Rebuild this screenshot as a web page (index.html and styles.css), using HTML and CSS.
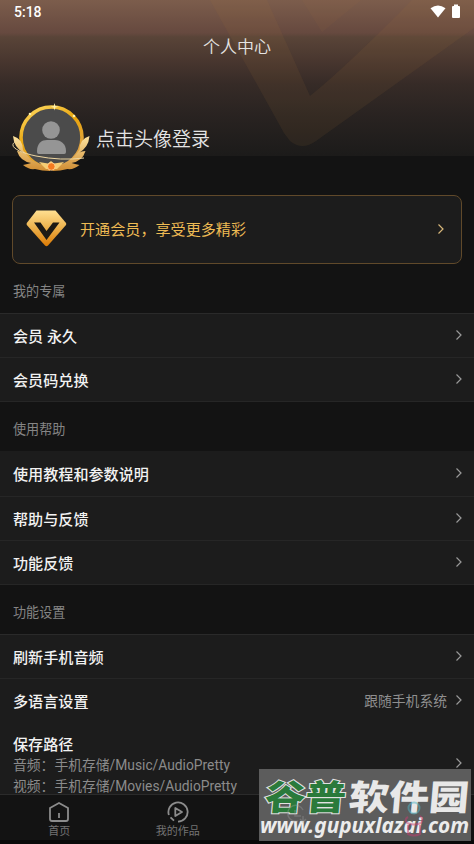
FILE: index.html
```html
<!DOCTYPE html>
<html lang="zh-CN">
<head>
<meta charset="utf-8">
<title>个人中心</title>
<link rel="stylesheet" href="styles.css">
</head>
<body>
<svg width="0" height="0" class="defs"><defs><symbol id="chev" viewBox="0 0 8 12"><path d="M1.5 1.5 6 6 1.5 10.5" fill="none" stroke="currentColor" stroke-width="1.2"/></symbol></defs></svg>
<div class="screen">
  <header class="hero">
    <svg class="hero-art" viewBox="0 0 474 156">
      <path d="M210 0H267L310 96Q345 68 412 0H474V28L316 141Q302 151 290 141L284 133Z" fill="#a5793f" fill-opacity=".1"/>
      <path d="M302 0H361L322 32Z" fill="#a5793f" fill-opacity=".08"/>
    </svg>
    <div class="status">
      <span>5:18</span>
      <svg width="31" height="16" viewBox="0 0 31 16"><path d="M.5 4.2Q8 -1.4 15.500 4.200L8 13.500Z" fill="#fff"/><path d="M22 3q0-1 1-1h1V.5h4V2h1q1 0 1 1v10q0 1-1 1h-6q-1 0-1-1Z" fill="#fff"/></svg>
    </div>
    <h1>个人中心</h1>
    <div class="profile">
      <svg class="avatar" viewBox="0 0 80 70">
        <defs><linearGradient id="ring" x1="0" y1="0" x2=".5" y2="1"><stop offset="0" stop-color="#ffdc67"/><stop offset=".5" stop-color="#e9a50d"/><stop offset="1" stop-color="#dda34b"/></linearGradient>
        <linearGradient id="leaf" x1="0" y1="0" x2="0" y2="1"><stop offset="0" stop-color="#ffe5a0"/><stop offset="1" stop-color="#cf8c32"/></linearGradient></defs>
        <circle cx="40.500" cy="34.500" r="30.500" fill="#4b4b4b" stroke="url(#ring)" stroke-width="3.600"/>
        <circle cx="40" cy="27" r="8.800" fill="#959595"/>
        <path d="M26 48c0-8 5-11 10-11h8c6 0 11 4 11 11 0 3-1 3-3 3H29c-2 0-3 0-3-3Z" fill="#959595"/>
        <g fill="url(#leaf)">
          <path d="M2 33Q12 36 12 47L20 57Q28 62 40 63L39 68Q31 68 24 66Q18 67 12 62Q17 61 20 60Q9 58 6 48Q10 48 13 50Q3 45 2 33Z"/>
        </g>
        <g fill="url(#leaf)" transform="translate(80.500 0) scale(-1 1)">
          <path d="M2 33Q12 36 12 47L20 57Q28 62 40 63L39 68Q31 68 24 66Q18 67 12 62Q17 61 20 60Q9 58 6 48Q10 48 13 50Q3 45 2 33Z"/>
        </g>
        <path d="M8 37C-6 42 6 49 25 53Q50 58 73 55" fill="none" stroke="#eed6a1" stroke-width="1"/>
        <path d="M28 59 37 60.500 40 58 43 60.500 53 59 46 66H35Z" fill="#f5cd74"/>
        <circle cx="40.300" cy="63.500" r="3.800" fill="#f47b20" stroke="#ffd99c" stroke-width=".8"/>
        <path d="m43.500 0 .8 3 3 .8-3 .8-.8 3-.8-3-3-.8 3-.8Z" fill="#fff0a8"/>
        <circle cx="19" cy="11" r="1.300" fill="#fff0a8"/><circle cx="63" cy="13" r="1.300" fill="#fff0a8"/>
      </svg>
      <span>点击头像登录</span>
    </div>
  </header>
  <main>
    <section class="vip">
      <svg width="41" height="37" viewBox="0 0 41 37"><defs><linearGradient id="gem" x1="0" y1="0" x2="0" y2="1"><stop offset="0" stop-color="#ffdf91"/><stop offset=".45" stop-color="#eeb551"/><stop offset="1" stop-color="#dc7b05"/></linearGradient></defs><path d="M10.500.5h19L40 13Q40.500 14 40 15L22 35.500q-1.500 1.500-3 0L.8 15Q.3 14 .8 13Z" fill="url(#gem)"/><path d="M8 12.500h6.500l6 8.500L27 12.500h6.500L20.500 30Z" fill="#1d1a15"/></svg>
      <span class="vip-text">开通会员，享受更多精彩</span>
      <svg class="chev"><use href="#chev"/></svg>
    </section>
    <h2>我的专属</h2>
    <div class="list top">
      <div class="row"><span>会员 永久</span><svg class="chev"><use href="#chev"/></svg></div>
      <div class="row"><span>会员码兑换</span><svg class="chev"><use href="#chev"/></svg></div>
    </div>
    <h2>使用帮助</h2>
    <div class="list help">
      <div class="row"><span>使用教程和参数说明</span><svg class="chev"><use href="#chev"/></svg></div>
      <div class="row"><span>帮助与反馈</span><svg class="chev"><use href="#chev"/></svg></div>
      <div class="row"><span>功能反馈</span><svg class="chev"><use href="#chev"/></svg></div>
    </div>
    <h2>功能设置</h2>
    <div class="list top">
      <div class="row"><span>刷新手机音频</span><svg class="chev"><use href="#chev"/></svg></div>
      <div class="row plain"><span>多语言设置</span><small>跟随手机系统</small><svg class="chev"><use href="#chev"/></svg></div>
      <div class="row path"><div><span>保存路径</span><p>音频：手机存储/Music/AudioPretty</p><p>视频：手机存储/Movies/AudioPretty</p></div><svg class="chev"><use href="#chev"/></svg></div>
    </div>
  </main>
  <nav>
    <div class="tab"><svg width="22" height="22" viewBox="0 0 22 22" fill="none" stroke="#8c8c8c" stroke-width="1.800"><path d="M2 7 11 2l9 5v11q0 2-2 2H4q-2 0-2-2ZM11 12v5"/></svg><span>首页</span></div>
    <div class="tab"><svg width="22" height="22" viewBox="0 0 22 22" fill="none" stroke="#8c8c8c" stroke-width="1.800" stroke-linejoin="round"><path d="M1.900 14A9.600 9.600 0 1 1 11 20.600M3.500 16.300 7 19.700M8.300 7v8l6.700-4Z"/></svg><span>我的作品</span></div>
    <div class="tab"></div><div class="tab"></div>
  </nav>
  <aside class="mark">
    <svg width="212" height="72" viewBox="0 0 212 72">
      <g class="brand" transform="translate(8 41) skewX(-5)"><text class="green" x="-3" y="0" textLength="81" lengthAdjust="spacingAndGlyphs">谷普</text><text class="white" x="81" y="0" textLength="120" lengthAdjust="spacingAndGlyphs">软件园</text></g>
      <g transform="translate(1 64) scale(1 1.120)"><text class="url" x="0" y="0" textLength="209" lengthAdjust="spacingAndGlyphs">www.gupuxlazai.com</text></g>
      <g fill="none" stroke="#a0a0a0" stroke-width="1.500" opacity=".35"><path d="M39 52A8 8 0 1 1 44 41M36 41v6h6M44 47v6m-3-3 3 3 3-3"/></g>
      <g fill="none" stroke-width="2" opacity=".5"><circle cx="155" cy="39" r="5.500" stroke="#50b6c6"/><path d="M149 48q-4 2-1 6 7 3 14 0 3-4-1-7M149 56v9q6 3 12 0v-9" stroke="#c83c70"/></g>
    </svg>
  </aside>
</div>
</body>
</html>
```
FILE: styles.css
```css
* { box-sizing: border-box; }
body, h1, h2, p { margin: 0; }
body { background: #131313; color: #f2f2f2; font-family: Roboto, "Noto Sans CJK SC", sans-serif; }
.defs { position: absolute; }
.screen { position: relative; width: 474px; height: 844px; overflow: hidden; display: flex; flex-direction: column; background: #131313; }
.hero { position: relative; flex: none; height: 156px; background: linear-gradient(#7c5d4c, #66493f 33px, #594438 37px, #49372f 60px, #362b27 84px, #292321 115px, #1c1b1a 155px); }
.hero-art { position: absolute; left: 0; top: 0; width: 474px; height: 156px; }
.status { position: relative; display: flex; justify-content: space-between; align-items: center; height: 24px; padding: 0 13px 0 14px; font-size: 14px; font-weight: 500; color: #fff; }
h1 { position: relative; height: 44px; line-height: 46px; text-align: center; font-size: 17px; font-weight: 350; color: #e6e4e3; }
.profile { position: relative; display: flex; align-items: center; gap: 5px; padding: 35px 0 0 11px; font-size: 19px; font-weight: 350; color: #e4e4e4; }
.profile span { padding-bottom: 2px; }
.avatar { width: 80px; height: 70px; }
main { flex: 1; min-height: 0; overflow: hidden; }
.vip { display: flex; align-items: center; height: 69px; margin: 39px 12px 0; padding: 0 16px 2px 13px; border: 1px solid #60492a; border-radius: 8px; background: #1c1c1c; color: #eebb54; font-size: 15.1px; }
.vip svg:first-child { margin-right: 13px; }
.vip-text { padding-bottom: 2px; }
.chev { width: 8px; height: 12px; margin-left: auto; color: #999; flex: none; }
.vip .chev { color: #d6b67a; }
h2 { height: 49px; padding: 3px 13px 0; line-height: 50px; font-size: 13.1px; font-weight: 400; color: #858585; }
.list { background: #1c1c1c; }
.top { border-top: 1px solid #2a2a2a; }
.row { display: flex; align-items: center; height: 44px; padding: 0 11px 2px 13px; border-bottom: 1px solid #262626; font-size: 15.1px; font-weight: 500; }
.help .row:first-child { height: 46px; }
.plain { border: 0; }
.row small { margin-left: auto; font-size: 13.8px; font-weight: 400; color: #8f8f8f; }
.row small + .chev { margin-left: 8px; }
.path { height: 90px; align-items: flex-start; padding-top: 11px; line-height: 22px; }
.path p { height: 20.5px; line-height: 18px; font-size: 13.8px; font-weight: 400; color: #8b8b8b; }
.path .chev { margin-top: 23px; }
nav { position: relative; flex: none; display: flex; height: 50px; border-top: 1px solid #2b2b2b; border-bottom: 4px solid #090909; background: #131313; }
.tab { flex: 1; display: flex; flex-direction: column; align-items: center; padding-top: 6px; color: #747474; font-size: 11px; line-height: 17px; }
.mark { position: absolute; left: 259px; top: 769px; width: 212px; height: 72px; background: rgba(96, 96, 96, .95); overflow: hidden; }
.mark text { font-family: "Noto Sans CJK SC", sans-serif; font-weight: 900; }
.brand text { font-size: 35px; }
.green { fill: #2a7a3b; stroke: #e2e2e2; stroke-width: 2px; paint-order: stroke; }
.white { fill: #e8e8e8; }
.mark .url { font: italic 700 19px "Noto Sans", sans-serif; fill: #ececec; }
```
